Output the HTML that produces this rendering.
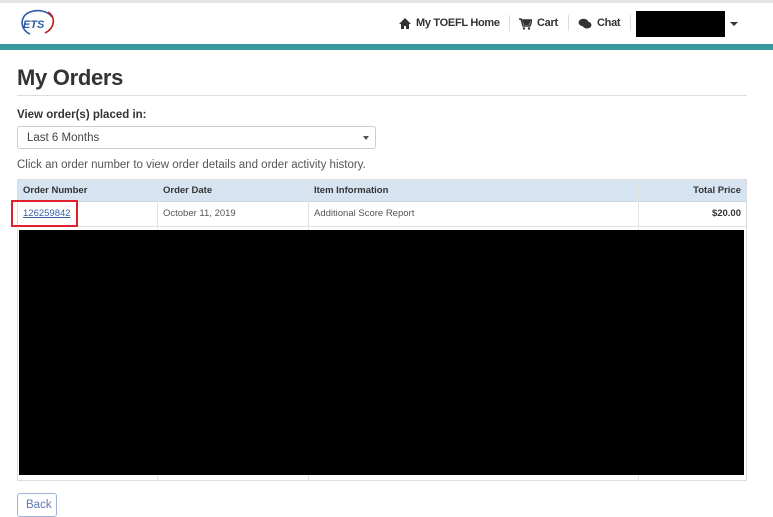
<!DOCTYPE html>
<html><head><style>
*{margin:0;padding:0;box-sizing:border-box}
body{width:773px;height:514px;overflow:hidden;background:#fff;font-family:"Liberation Sans",sans-serif;color:#333;position:relative}
.a{position:absolute}
.nav{font-size:11px;font-weight:bold;color:#333;top:17px;letter-spacing:-0.3px;white-space:nowrap}
.sep{width:1px;height:16px;background:#ddd;top:15px}
.cell{position:absolute;font-size:9.5px;top:0}
</style></head><body>
<div class="a" style="left:0;top:0;width:773px;height:3px;background:#e6e6e6"></div>
<svg class="a" style="left:18px;top:8px" width="40" height="30" viewBox="0 0 40 30">
<path d="M12 26 C2 22 1 8 12 4 C20 1 30 3 34 9" fill="none" stroke="#2a5aa8" stroke-width="1.6"/>
<path d="M30 4 C38 9 37 20 27 25" fill="none" stroke="#b22" stroke-width="1.6"/>
<text x="5" y="20" font-family="Liberation Sans" font-weight="bold" font-style="italic" font-size="11" fill="#2a5aa8">ETS</text>
</svg>
<svg class="a" style="left:399px;top:18px" width="12" height="11" viewBox="0 0 12 11"><path d="M6 0L0 6h2v5h3V8h2v3h3V6h2z" fill="#333"/></svg>
<div class="a nav" style="left:416px">My TOEFL Home</div>
<div class="a sep" style="left:509px"></div>
<svg class="a" style="left:519px;top:18px" width="13" height="12" viewBox="0 0 13 12"><path d="M0 1h2l2 7h7l2-6H3" fill="none" stroke="#333" stroke-width="1.5"/><circle cx="5" cy="10.5" r="1.2" fill="#333"/><circle cx="10" cy="10.5" r="1.2" fill="#333"/><path d="M3 2h9l-2 5H5z" fill="#333"/></svg>
<div class="a nav" style="left:537px">Cart</div>
<div class="a sep" style="left:568px"></div>
<svg class="a" style="left:578px;top:18px" width="14" height="12" viewBox="0 0 14 12"><ellipse cx="5.5" cy="4.5" rx="5" ry="3.8" fill="#333"/><ellipse cx="9" cy="7" rx="4.5" ry="3.5" fill="#333"/></svg>
<div class="a nav" style="left:597px">Chat</div>
<div class="a sep" style="left:630px"></div>
<div class="a" style="left:636px;top:11px;width:89px;height:26px;background:#000"></div>
<div class="a" style="left:730px;top:22px;width:0;height:0;border-left:4px solid transparent;border-right:4px solid transparent;border-top:4px solid #333"></div>
<div class="a" style="left:0;top:44px;width:773px;height:6px;background:#3a999c"></div>
<div class="a" style="left:17px;top:65px;font-size:22px;font-weight:bold;color:#333;letter-spacing:-0.3px">My Orders</div>
<div class="a" style="left:17px;top:95px;width:730px;height:1px;background:#ddd"></div>
<div class="a" style="left:17px;top:109px;font-size:11.5px;font-weight:bold">View order(s) placed in:</div>
<div class="a" style="left:17px;top:126px;width:359px;height:23px;border:1px solid #ccc;border-radius:3px;font-size:11.5px;padding:5px 9px;color:#444">Last 6 Months</div>
<div class="a" style="left:363px;top:136px;border-left:3px solid transparent;border-right:3px solid transparent;border-top:4px solid #555"></div>
<div class="a" style="left:17px;top:159px;font-size:11.5px;color:#555">Click an order number to view order details and order activity history.</div>
<div class="a" style="left:17px;top:179px;width:730px;height:302px;border:1px solid #ddd"></div>
<div class="a" style="left:18px;top:180px;width:728px;height:22px;background:#d6e4f1;border-bottom:1px solid #c9d6e2"></div>
<div class="a" style="left:157px;top:180px;width:1px;height:300px;background:#e3e3e3"></div>
<div class="a" style="left:308px;top:180px;width:1px;height:300px;background:#e3e3e3"></div>
<div class="a" style="left:638px;top:180px;width:1px;height:300px;background:#e3e3e3"></div>
<div class="a" style="left:18px;top:226px;width:728px;height:1px;background:#e3e3e3"></div>
<div class="a" style="left:0;top:185px;width:773px;font-size:9.5px;font-weight:bold">
<span class="cell" style="left:23px">Order Number</span><span class="cell" style="left:163px">Order Date</span><span class="cell" style="left:314px">Item Information</span><span class="cell" style="left:670px;width:71px;text-align:right">Total Price</span></div>
<div class="a" style="left:0;top:208px;width:773px;font-size:9.5px;color:#555">
<span class="cell" style="left:23px;color:#3a5fa8;text-decoration:underline">126259842</span><span class="cell" style="left:163px">October 11, 2019</span><span class="cell" style="left:314px">Additional Score Report</span><span class="cell" style="left:670px;width:71px;text-align:right;font-weight:bold;color:#333">$20.00</span></div>
<div class="a" style="left:11px;top:200px;width:67px;height:27px;border:2px solid #e0202a"></div>
<div class="a" style="left:19px;top:230px;width:725px;height:245px;background:#000"></div>
<div class="a" style="left:17px;top:493px;width:40px;height:24px;border:1px solid #9fb4d6;border-radius:3px;font-size:11.5px;color:#5a79b3;padding:5px 0 0 8px">Back</div>
</body></html>
